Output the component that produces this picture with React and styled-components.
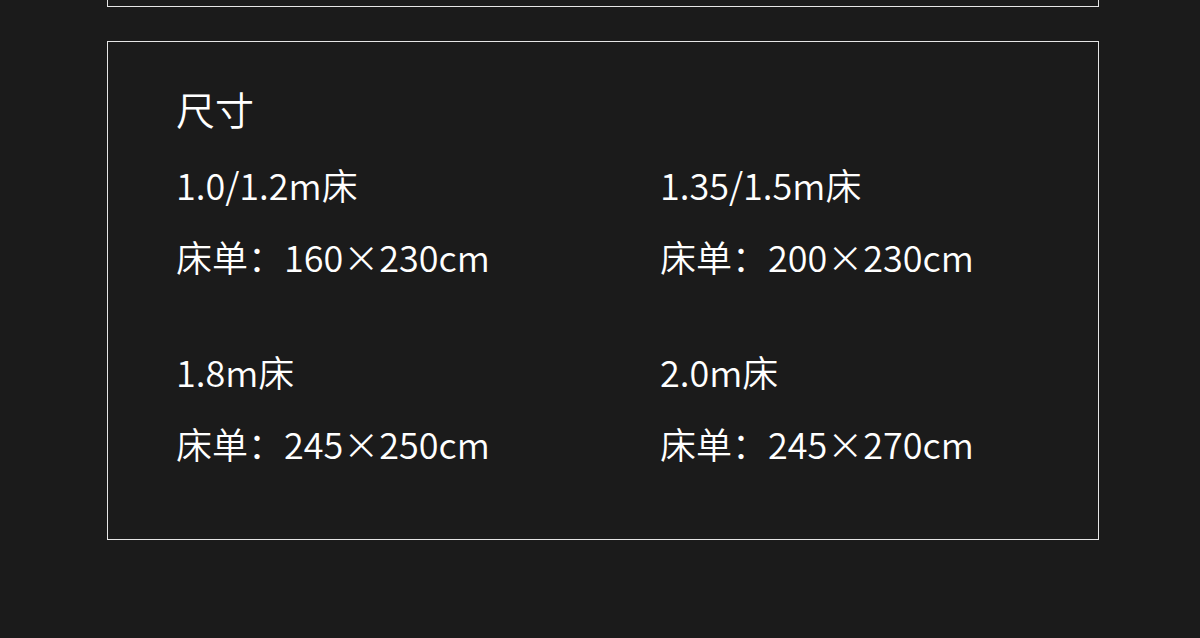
import React from 'react';
import styled, { createGlobalStyle } from 'styled-components';

const GlobalStyle = createGlobalStyle`
  html, body {
    margin: 0;
    padding: 0;
    background: #1b1b1b;
  }
  body {
    font-family: "Noto Sans CJK SC", "Noto Sans", sans-serif;
    color: #fff;
  }
`;

const Page = styled.div`
  width: 1200px;
  height: 638px;
  overflow: hidden;
  background: #1b1b1b;
`;

const PrevCard = styled.div`
  width: 992px;
  height: 7px;
  box-sizing: border-box;
  margin-left: 107px;
  border: 1px solid #e6e6e6;
  border-top: none;
`;

const SizeCard = styled.section`
  width: 992px;
  height: 499px;
  box-sizing: border-box;
  margin: 34px 0 0 107px;
  border: 1px solid #e6e6e6;
  padding: 36px 0 0 68px;
`;

const Title = styled.h2`
  margin: 0 0 10px;
  font-size: 39px;
  font-weight: 350;
  line-height: 60px;
`;

const SizeGrid = styled.div`
  display: grid;
  grid-template-columns: 484px 1fr;
  row-gap: 43px;
`;

const SizeItem = styled.div`
  display: flex;
  flex-direction: column;
`;

const Line = styled.p`
  margin: 0;
  font-size: 36px;
  font-weight: 350;
  line-height: 72px;
  white-space: nowrap;
`;

const sizes = [
  { bed: '1.0/1.2m床', sheet: '160×230cm' },
  { bed: '1.35/1.5m床', sheet: '200×230cm' },
  { bed: '1.8m床', sheet: '245×250cm' },
  { bed: '2.0m床', sheet: '245×270cm' },
];

export default function App() {
  return (
    <Page>
      <GlobalStyle />
      <PrevCard />
      <SizeCard>
        <Title>尺寸</Title>
        <SizeGrid>
          {sizes.map((item, i) => (
            <SizeItem key={i}>
              <Line>{item.bed}</Line>
              <Line>床单：{item.sheet}</Line>
            </SizeItem>
          ))}
        </SizeGrid>
      </SizeCard>
    </Page>
  );
}
